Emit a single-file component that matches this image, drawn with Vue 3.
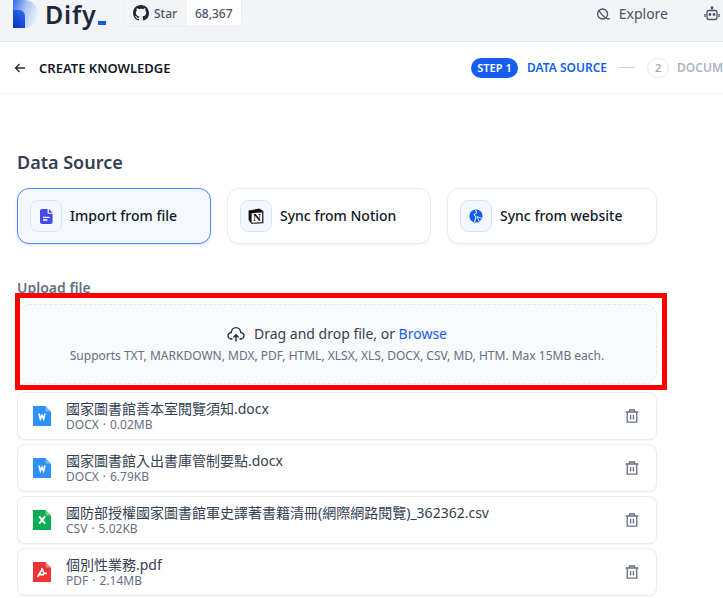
<script setup>
const files = [
  { name: '國家圖書館善本室閱覽須知.docx', meta: 'DOCX', size: '0.02MB', kind: 'word' },
  { name: '國家圖書館入出書庫管制要點.docx', meta: 'DOCX', size: '6.79KB', kind: 'word' },
  { name: '國防部授權國家圖書館軍史譯著書籍清冊(網際網路閱覽)_362362.csv', meta: 'CSV', size: '5.02KB', kind: 'excel' },
  { name: '個別性業務.pdf', meta: 'PDF', size: '2.14MB', kind: 'pdf' },
]
</script>

<template>
  <div class="page">
    <header class="topbar">
      <div class="brand">
        <svg class="logo" width="25" height="28" viewBox="0 0 25 28">
          <defs>
            <linearGradient id="lgD" x1="0" y1="0.2" x2="1" y2="0.6">
              <stop offset="0" stop-color="#3f74ea" />
              <stop offset="0.45" stop-color="#a9c4f7" />
              <stop offset="1" stop-color="#eef3fd" />
            </linearGradient>
            <linearGradient id="lgB" x1="0" y1="1" x2="0.7" y2="0">
              <stop offset="0" stop-color="#0033c4" />
              <stop offset="1" stop-color="#2f66e6" />
            </linearGradient>
          </defs>
          <path d="M0 0H11C19.5 0 25 6 25 14C25 22 19.5 28 11 28H0Z" fill="url(#lgD)" />
          <path d="M0 10H6C10 10 12 13 12 17V28H0Z" fill="url(#lgB)" />
        </svg>
        <span class="wordmark">Dify</span>
        <i class="cursor"></i>
      </div>
      <div class="star">
        <span class="star-l">
          <svg width="16" height="16" viewBox="0 0 16 16"><path fill="#1d2939" d="M8 0C3.58 0 0 3.58 0 8c0 3.54 2.29 6.53 5.47 7.59.4.07.55-.17.55-.38 0-.19-.01-.82-.01-1.49-2.01.37-2.53-.49-2.69-.94-.09-.23-.48-.94-.82-1.13-.28-.15-.68-.52-.01-.53.63-.01 1.08.58 1.23.82.72 1.21 1.87.87 2.33.66.07-.52.28-.87.51-1.07-1.78-.2-3.64-.89-3.64-3.95 0-.87.31-1.59.82-2.15-.08-.2-.36-1.02.08-2.12 0 0 .67-.21 2.2.82.64-.18 1.32-.27 2-.27s1.36.09 2 .27c1.53-1.04 2.2-.82 2.2-.82.44 1.1.16 1.92.08 2.12.51.56.82 1.27.82 2.15 0 3.07-1.87 3.75-3.65 3.95.29.25.54.73.54 1.48 0 1.07-.01 1.93-.01 2.2 0 .21.15.46.55.38A8.01 8.01 0 0 0 16 8c0-4.42-3.58-8-8-8z"/></svg>
          Star
        </span>
        <span class="star-r">68,367</span>
      </div>
      <nav class="nav">
        <span class="nav-item">
          <svg width="14" height="14" viewBox="0 0 14 14" fill="none" stroke="#495464" stroke-width="1.3"><circle cx="6.6" cy="7" r="5"/><path d="M2.6 3C4.6 6.6 8 10 11.6 11.8C12.8 12.4 13.4 12 13 11"/></svg>
          Explore
        </span>
        <svg class="bot" width="16" height="16" viewBox="0 0 16 16" fill="none" stroke="#495464" stroke-width="1.3"><rect x="3" y="4.5" width="10" height="9" rx="2"/><path d="M8 4.5V2M1 8v3M15 8v3"/><circle cx="8" cy="1.6" r=".8" fill="#495464"/><circle cx="6" cy="8.5" r=".8" fill="#495464"/><circle cx="10" cy="8.5" r=".8" fill="#495464"/></svg>
      </nav>
    </header>

    <section class="subbar">
      <div class="crumb">
        <svg width="12" height="12" viewBox="0 0 12 12" fill="none" stroke="#1d2939" stroke-width="1.3"><path d="M11 6H1.5M5.5 2L1.5 6L5.5 10"/></svg>
        <span>CREATE KNOWLEDGE</span>
      </div>
      <div class="steps">
        <span class="pill">STEP 1</span>
        <span class="step-on">DATA SOURCE</span>
        <i class="dash"></i>
        <span class="num">2</span>
        <span class="step-off">DOCUM</span>
      </div>
    </section>

    <main class="main">
      <h2 class="title">Data Source</h2>
      <div class="sources">
        <div class="source active w1">
          <span class="ico">
            <svg width="13" height="15" viewBox="0 0 13 15"><path fill="#444ce7" d="M2 0H7.6V3.4C7.6 4.2 8.2 4.8 9 4.8H12.6V13C12.6 14.1 11.7 15 10.6 15H2C.9 15 0 14.1 0 13V2C0 .9.9 0 2 0Z"/><path fill="#444ce7" d="M8.8 0L12.6 3.7H8.8Z"/><path stroke="#fff" stroke-width="1.3" d="M3 8.4H9.6M3 11H7.4"/></svg>
          </span>
          <span class="src-text">Import from file</span>
        </div>
        <div class="source w2">
          <span class="ico">
            <svg width="16" height="16" viewBox="0 0 16 16"><path d="M.6 2.4L11.4.6L15.4 3.2V15.2L3.4 15.8L.6 12Z" fill="#111"/><path d="M3.6 5.2L14.2 4.6V14.2L3.6 14.7Z" fill="#fff"/><text x="9" y="13" text-anchor="middle" class="notion-n">N</text></svg>
          </span>
          <span class="src-text">Sync from Notion</span>
        </div>
        <div class="source w3">
          <span class="ico">
            <svg width="15" height="15" viewBox="0 0 15 15"><circle cx="7" cy="7" r="6.6" fill="#155eef"/><path d="M6.6 1L7.6 4L5 5.5L7 8L5.6 13" fill="none" stroke="#f5f9ff" stroke-width="1"/><path d="M8 7.6L14.6 10L11.8 11L11 14Z" fill="#155eef" stroke="#f5f9ff" stroke-width=".9"/></svg>
          </span>
          <span class="src-text">Sync from website</span>
        </div>
      </div>

      <div class="label">Upload file</div>
      <div class="drop">
        <div class="drop-l1">
          <svg width="18" height="18" viewBox="0 0 18 18" fill="none" stroke="#1d2939" stroke-width="1.4" stroke-linecap="round" stroke-linejoin="round"><path d="M5 14H4.4C2.6 14 1 12.6 1 10.8C1 9 2.4 7.6 4.2 7.6C4.5 4.8 6.5 2.6 9 2.6C11.5 2.6 13.5 4.8 13.8 7.6C15.6 7.6 17 9 17 10.8C17 12.6 15.4 14 13.6 14H13"/><path d="M9 16V10M6.8 12L9 9.8L11.2 12"/></svg>
          <span>Drag and drop file, or <a class="browse">Browse</a></span>
        </div>
        <div class="drop-l2">Supports TXT, MARKDOWN, MDX, PDF, HTML, XLSX, XLS, DOCX, CSV, MD, HTM. Max 15MB each.</div>
      </div>

      <div class="files">
        <div v-for="f in files" :key="f.name" class="file">
          <svg class="ftype" width="18" height="20" viewBox="0 0 18 20">
            <path :class="f.kind" d="M0 0H12.6L18 5.4V20H0Z" />
            <path fill="#fff" fill-opacity=".4" d="M12.6 0L18 5.4H12.6Z" />
            <path v-if="f.kind === 'word'" d="M6 7.5L7.4 13L9 9.4L10.6 13L12 7.5" fill="none" stroke="#fff" stroke-width="1.7" />
            <path v-if="f.kind === 'excel'" d="M6.2 6.4L12.2 13.6M12.2 6.4L6.2 13.6" fill="none" stroke="#fff" stroke-width="2" />
            <path v-if="f.kind === 'pdf'" d="M4.5 15L8.6 8.2L9 6M9 6.5L11 11.4H14M6.5 12.6H11" fill="none" stroke="#fff" stroke-width="1.6" />
          </svg>
          <div class="finfo">
            <div class="fname">{{ f.name }}</div>
            <div class="fmeta">{{ f.meta }}<em>·</em>{{ f.size }}</div>
          </div>
          <svg class="trash" width="14" height="14" viewBox="0 0 14 14" fill="none" stroke="#676f83" stroke-width="1.3"><path d="M.6 3H13.4M4.6 3V1H9.4V3M2.2 3V13.2H11.8V3M5.6 6V10.4M8.4 6V10.4"/></svg>
        </div>
      </div>
    </main>

    <div class="mark"></div>
  </div>
</template>

<style>
html, body { margin: 0; background: #fff; overflow: hidden; }
</style>

<style scoped>
.page {
  position: relative;
  width: 723px;
  height: 598px;
  overflow: hidden;
  font-family: "Noto Sans", "Noto Sans CJK TC", sans-serif;
  color: #1d2939;
  background: #fff;
}
.topbar {
  height: 41px;
  display: flex;
  align-items: flex-start;
  background: #f2f4f7;
  border-bottom: 1px solid #e2e4ea;
  padding-left: 13px;
  box-sizing: content-box;
}
.brand { display: flex; align-items: flex-start; width: 110px; height: 41px; }
.logo { flex: none; }
.wordmark {
  margin-left: 7px;
  font-size: 25px;
  line-height: 28px;
  font-weight: 600;
  letter-spacing: .8px;
  color: #1d2939;
  white-space: nowrap;
}
.cursor {
  flex: none;
  width: 8px;
  height: 4px;
  margin: 21px 0 0 1px;
  background: #155eef;
}
.star {
  display: flex;
  height: 27px;
  border: 1px solid #eaecf0;
  border-top: 0;
  border-radius: 0 0 6px 6px;
  overflow: hidden;
  font-size: 12px;
  font-weight: 500;
  color: #495464;
  box-sizing: border-box;
}
.star-l { display: flex; align-items: center; gap: 5px; padding: 0 9px; background: #f2f4f7; width: 63px; box-sizing: border-box; }
.star-r { display: flex; align-items: center; padding: 0 8px; background: #fff; }
.nav { margin-left: auto; display: flex; align-items: center; gap: 36px; margin-right: 3px; margin-top: 4px; font-size: 14px; color: #495464; }
.nav-item { display: flex; align-items: center; gap: 9px; }
.bot { flex: none; }
.subbar {
  height: 51px;
  display: flex;
  align-items: center;
  justify-content: space-between;
  border-bottom: 1px solid #f2f4f7;
  padding-left: 14px;
  overflow: hidden;
}
.crumb { display: flex; align-items: center; gap: 13px; font-size: 13px; font-weight: 600; color: #101828; }
.steps { display: flex; align-items: center; flex: none; width: 252px; white-space: nowrap; font-size: 12px; font-weight: 600; }
.pill { background: #155eef; color: #fff; border-radius: 10px; height: 20px; line-height: 20px; width: 47px; text-align: center; font-size: 11px; flex: none; }
.step-on { color: #155eef; margin-left: 9px; }
.dash { width: 16px; height: 1px; background: #d0d5dd; margin: 0 12px; flex: none; }
.num { width: 22px; height: 20px; line-height: 18px; border: 1px solid #e4e7ec; border-radius: 10px; text-align: center; color: #98a2b3; font-size: 11px; box-sizing: border-box; flex: none; font-weight: 500; }
.step-off { color: #98a2b3; margin-left: 8px; opacity: .8; }
.main { padding: 0 0 0 17px; width: 640px; }
.title { margin: 56px 0 0; font-size: 18px; line-height: 24px; font-weight: 600; color: #354052; }
.sources { display: flex; gap: 16px; margin-top: 14px; }
.source {
  height: 56px;
  box-sizing: border-box;
  display: flex;
  align-items: center;
  gap: 8px;
  padding: 0 12px;
  font-size: 14px;
  font-weight: 500;
  color: #101828;
  background: #fff;
  border: 1px solid #eaecf0;
  border-radius: 12px;
  box-shadow: 0 1px 2px rgba(16, 24, 40, .05);
}
.src-text { padding-bottom: 2px; }
.w1 { width: 194px; }
.w2 { width: 204px; }
.w3 { width: 210px; }
.source.active { background: #f5f9ff; border-color: #5289ff; box-shadow: 0 1px 3px rgba(21, 94, 239, .2); }
.ico {
  width: 32px;
  height: 32px;
  flex: none;
  box-sizing: border-box;
  display: flex;
  align-items: center;
  justify-content: center;
  background: #f5f9ff;
  border: 1px solid #d9e8fd;
  border-radius: 8px;
}
.notion-n { font-family: "Liberation Serif", serif; font-size: 11px; font-weight: 700; fill: #111; }
.label { margin-top: 34px; font-size: 14px; line-height: 20px; font-weight: 600; color: #676f83; }
.drop {
  margin-top: 6px;
  height: 80px;
  box-sizing: border-box;
  background: #f9fafb;
  border: 1px dashed #e4e7ec;
  border-radius: 12px;
  display: flex;
  flex-direction: column;
  align-items: center;
  justify-content: center;
}
.drop-l1 { display: flex; align-items: center; gap: 9px; font-size: 14px; line-height: 20px; color: #354052; margin-top: 1px; }
.browse { color: #155eef; }
.drop-l2 { margin-top: 3px; font-size: 12px; line-height: 18px; color: #676f83; }
.files { margin-top: 8px; display: flex; flex-direction: column; gap: 4px; }
.file {
  height: 48px;
  box-sizing: border-box;
  display: flex;
  align-items: center;
  padding: 0 17px 0 15px;
  background: #fff;
  border: 1px solid #eaecf0;
  border-radius: 8px;
  box-shadow: 0 1px 2px rgba(16, 24, 40, .04);
}
.ftype { flex: none; margin-right: 15px; }
.ftype .word { fill: #2e90fa; }
.ftype .excel { fill: #0cad52; }
.ftype .pdf { fill: #ef3333; }
.finfo { flex: 1; min-width: 0; }
.fname { font-size: 14px; line-height: 17px; color: #354052; white-space: nowrap; margin-top: -1px; }
.fmeta { font-size: 12px; line-height: 14px; color: #676f83; margin-top: 1px; }
.fmeta em { font-style: normal; margin: 0 4px; }
.trash { flex: none; }
.mark {
  position: absolute;
  left: 15px;
  top: 293px;
  width: 652px;
  height: 97px;
  box-sizing: border-box;
  border: 5.5px solid #ff0000;
  pointer-events: none;
}
</style>
